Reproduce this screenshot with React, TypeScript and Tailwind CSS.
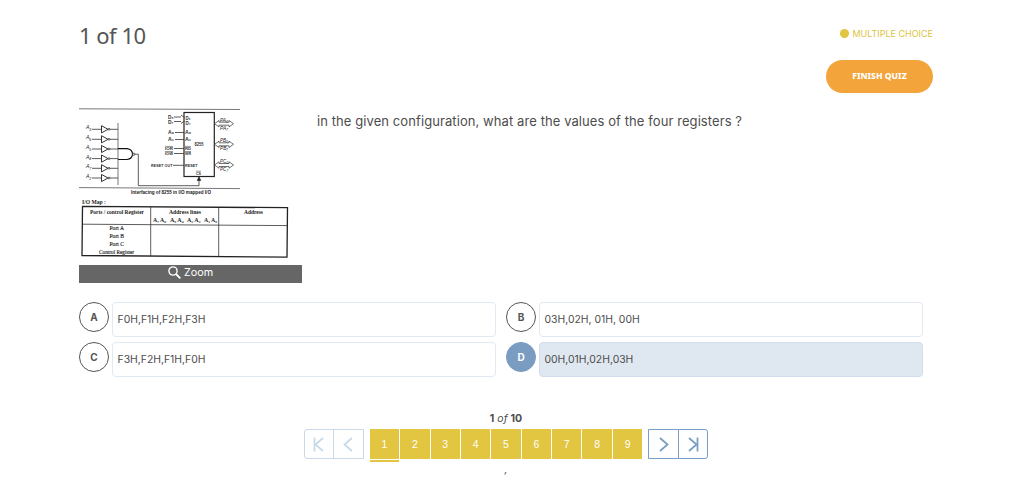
import { useState } from "react";
import clsx from "clsx";

type Option = { letter: string; text: string };

const OPTIONS: Option[] = [
	{ letter: "A", text: "F0H,F1H,F2H,F3H" },
	{ letter: "B", text: "03H,02H, 01H, 00H" },
	{ letter: "C", text: "F3H,F2H,F1H,F0H" },
	{ letter: "D", text: "00H,01H,02H,03H" },
];

const PAGES = [1, 2, 3, 4, 5, 6, 7, 8, 9];

const INVERTERS = [
	{ y: 24.3, pin: "3" },
	{ y: 34.3, pin: "6" },
	{ y: 44, pin: "5" },
	{ y: 53.6, pin: "4" },
	{ y: 63.3, pin: "7" },
	{ y: 73, pin: "2" },
];

const BUSES = [
	{ y: 18.7, name: "PA" },
	{ y: 39.3, name: "PB" },
	{ y: 60, name: "PC" },
];

type LabelProps = {
	x: number;
	y: number;
	width: number;
	children: string;
	size?: number;
};

const Label = ({ x, y, width, children, size = 4.6 }: LabelProps) => (
	<text x={x} y={y} fontSize={size} textLength={width} lengthAdjust="spacingAndGlyphs">
		{children}
	</text>
);

const CircuitDiagram = () => (
	<svg
		width="223"
		height="160"
		viewBox="0 0 223 160"
		fill="none"
		stroke="#333"
		strokeWidth="0.8"
		className="block font-['Liberation_Sans',sans-serif]"
	>
		<path d="M0 3.8L161 4.5M0 82.6L161 83.6" stroke="#555" />

		{/* address decoder */}
		<path d="M39 18V80" stroke="#555" />
		{INVERTERS.map(({ y, pin }) => (
			<g key={pin}>
				<path d={`M13 ${y}H22M29.5 ${y}H39`} />
				<path d={`M22.5 ${y - 3.6}L29 ${y}L22.5 ${y + 3.6}Z`} strokeWidth="1" />
				<circle cx="30" cy={y} r="0.9" fill="#fff" />
				<g fill="#222" stroke="none" className="italic">
					<Label x={7} y={y} width={3.5}>A</Label>
					<Label x={10.3} y={y + 1.5} width={2} size={3.5}>{pin}</Label>
				</g>
			</g>
		))}
		<path d="M39 43.7H48Q53.5 44.5 53.5 49Q53.5 53.8 48 54.5H39" stroke="#111" strokeWidth="1.2" />
		<circle cx="54.8" cy="49.2" r="1.1" fill="#fff" />
		<path d="M56 49.2H59.3V80.7H120V73" />
		<path d="M118.3 75.5L120 71.8L121.7 75.5Z" fill="#222" />

		{/* 8255 chip */}
		<rect x="105" y="7.5" width="30.3" height="64" stroke="#222" strokeWidth="1.2" />
		<path d="M95 12H102M95 16.5H102M102 10L105.5 12.5M102 18.5L105.5 16M96 27.5H105M96 34.5H105M95 43.5H105M95 48.5H105M94 60.3H105" />
		<g fill="#333" stroke="none" className="font-bold">
			<Label x={89} y={14.4} width={5.5}>D₀</Label>
			<Label x={89} y={19.1} width={5.5}>D₇</Label>
			<Label x={106.5} y={14.8} width={5}>D₀</Label>
			<Label x={106.5} y={19.8} width={5}>D₇</Label>
			<Label x={89} y={29} width={6}>A₀</Label>
			<Label x={89} y={36} width={6}>A₁</Label>
			<Label x={106} y={29} width={6}>A₀</Label>
			<Label x={106} y={36} width={6}>A₁</Label>
			<Label x={86} y={45} width={8} size={4}>IOR</Label>
			<Label x={86} y={50.1} width={8} size={4}>IOW</Label>
			<Label x={106} y={45} width={6} size={4}>RD</Label>
			<Label x={106} y={50.1} width={6} size={4}>WR</Label>
			<Label x={72} y={61.8} width={21.5} size={4.2}>RESET OUT</Label>
			<Label x={106} y={61.8} width={12.5} size={4.2}>RESET</Label>
			<Label x={115.5} y={41} width={9}>8255</Label>
			<Label x={117} y={70.2} width={5} size={4.4}>CS</Label>
		</g>
		<path d="M86 41.4H94M86 46.5H94M106 41.4H112M106 46.5H112M117 66.2H122" strokeWidth="0.5" />
		{BUSES.map(({ y, name }) => (
			<g key={name}>
				<path
					d={`M135.5 ${y}L140 ${y - 3.2}V${y - 1.5}H150V${y - 3.2}L154.5 ${y}L150 ${y + 3.2}V${y + 1.5}H140V${y + 3.2}Z`}
					fill="#fff"
					strokeWidth="0.7"
				/>
				<g fill="#222" stroke="none" className="italic">
					<Label x={141} y={y - 2.2} width={8} size={5}>{`${name}₀`}</Label>
					<Label x={141} y={y + 6} width={8} size={5}>{`${name}₇`}</Label>
				</g>
			</g>
		))}
		<g fill="#222" stroke="none" className="font-bold">
			<Label x={52} y={89.2} width={80} size={4.8}>Interfacing of 8255 in I/O mapped I/O</Label>
		</g>

		{/* I/O map table */}
		<path d="M3.5 101.3L208.5 102.7L208 152.2L3 150.5Z" stroke="#222" strokeWidth="1.3" />
		<path d="M3.5 119.2L208.5 120.6M71.7 101.5V151M139.7 102V151.5" stroke="#333" />
		<g fill="#222" stroke="none" className="font-['Liberation_Serif',serif] font-bold">
			<Label x={3} y={98.8} width={24} size={5.7}>I/O Map :</Label>
			<Label x={11} y={108.5} width={54} size={5.2}>Ports / control Register</Label>
			<Label x={90} y={108.9} width={32} size={5.2}>Address lines</Label>
			<Label x={165} y={109.3} width={19} size={5.2}>Address</Label>
			<Label x={74} y={117.3} width={13} size={6}>A₇ A₆</Label>
			<Label x={91} y={117.3} width={13.5} size={6}>A₅ A₄</Label>
			<Label x={108} y={117.3} width={13.5} size={6}>A₃ A₂</Label>
			<Label x={125} y={117.3} width={13} size={6}>A₁ A₀</Label>
		</g>
		<g fill="#111" stroke="#111" strokeWidth="0.12" className="font-['Liberation_Serif',serif]">
			<Label x={30.5} y={125.4} width={14.5} size={5.4}>Port A</Label>
			<Label x={30.5} y={133.4} width={14.5} size={5.4}>Port B</Label>
			<Label x={30.5} y={141} width={14.5} size={5.4}>Port C</Label>
			<Label x={20} y={149} width={35} size={5.4}>Control Register</Label>
		</g>
	</svg>
);

type OptionRowProps = { option: Option; selected: boolean; onSelect: () => void };

const OptionRow = ({ option, selected, onSelect }: OptionRowProps) => (
	<button type="button" className="flex h-[35px] w-[417px] gap-[3px] text-left" onClick={onSelect}>
		<span
			className={clsx(
				"flex size-[30px] shrink-0 items-center justify-center rounded-full border pt-px text-[10px] font-bold",
				selected ? "border-[#7a9cc1] bg-[#7a9cc1] text-white" : "border-[#555] text-[#555]",
			)}
		>
			{option.letter}
		</span>
		<span
			className={clsx(
				"flex h-[35px] flex-1 items-center rounded-[4px] border px-[4.5px] text-[10.4px] text-[#4d4d4d]",
				selected ? "border-[#d0deed] bg-[#dfe8f1]" : "border-[#e1e9f3]",
			)}
		>
			{option.text}
		</span>
	</button>
);

export default function App() {
	const [selected, setSelected] = useState("D");
	const [page, setPage] = useState(1);

	return (
		<main className="h-[495px] w-[1024px] overflow-hidden bg-white pr-[91px] pl-[79px] font-['Inter',sans-serif] text-[#4d4d4d]">
			<header className="flex h-[105px] justify-between">
				<h1 className="pt-[19px] font-['Noto_Sans',sans-serif] text-[22px] leading-[32px] tracking-[-0.5px] text-[#555]">
					1 of 10
				</h1>
				<div className="flex flex-col items-end pt-[27px]">
					<div className="flex h-[14px] items-center gap-[3px] text-[9px] text-[#dbc43d]">
						<span className="mb-px size-[9px] rounded-full bg-[#e2c541]" />
						MULTIPLE CHOICE
					</div>
					<button
						type="button"
						className="mt-[19px] h-[33px] w-[107px] rounded-full bg-[#f3a43b] pb-px font-['Noto_Sans',sans-serif] text-[8.6px] font-extrabold text-white"
					>
						FINISH QUIZ
					</button>
				</div>
			</header>

			<section className="flex h-[197px] gap-[15px]">
				<div className="w-[223px]">
					<CircuitDiagram />
					<button
						type="button"
						className="flex h-[18px] w-full items-start justify-center gap-[3px] bg-[#666] text-[10.8px] leading-[16px] text-white"
					>
						<svg width="13" height="14" viewBox="0 0 13 14" fill="none" stroke="currentColor" strokeWidth="1.4">
							<circle cx="5" cy="6" r="4.1" />
							<path d="M8 9L12.3 13.3" strokeWidth="1.8" />
						</svg>
						Zoom
					</button>
				</div>
				<p className="pt-[7px] text-[13px] leading-[19px] tracking-[0.085px] whitespace-nowrap">
					in the given configuration, what are the values of the four registers ?
				</p>
			</section>

			<section className="grid grid-cols-[417px_417px] gap-x-[10px] gap-y-[5px]">
				{OPTIONS.map((option) => (
					<OptionRow
						key={option.letter}
						option={option}
						selected={selected === option.letter}
						onSelect={() => {
							setSelected(option.letter);
						}}
					/>
				))}
			</section>

			<footer className="flex flex-col items-center pt-[35px]">
				<div className="text-[10.5px] leading-[14px]">
					<b>1</b> <i>of</i> <b>10</b>
				</div>
				<nav className="mt-[3px] flex h-[33px] gap-[6px]">
					<div className="flex h-[30px] w-[60px] rounded-l-[3px] border border-[#c9d9e9] text-[#c9d9e9]">
						<button type="button" className="flex w-[29px] items-center justify-center border-r border-current">
							<svg width="11" height="16" viewBox="0 0 11 16" fill="none" stroke="currentColor" strokeWidth="1.8">
								<path d="M1.5 1.5V15.5M10 2L2.5 8.5L10 15" />
							</svg>
						</button>
						<button type="button" className="flex flex-1 items-center justify-center">
							<svg width="10" height="16" viewBox="0 0 10 16" fill="none" stroke="currentColor" strokeWidth="1.8">
								<path d="M9 2L1.5 8.5L9 15" />
							</svg>
						</button>
					</div>
					<div className="flex gap-px font-['Liberation_Sans',sans-serif] text-[10.5px] text-white">
						{PAGES.map((n) => (
							<button
								key={n}
								type="button"
								className="flex w-[29.4px] flex-col gap-px"
								onClick={() => {
									setPage(n);
								}}
							>
								<span className="flex h-[30px] w-full items-center justify-center bg-[#e2c541] pt-px">{n}</span>
								{page === n && <span className="h-[2px] w-full bg-[#e2c541]" />}
							</button>
						))}
					</div>
					<div className="flex h-[30px] w-[60px] rounded-r-[3px] border border-[#7a9fc4] text-[#7a9fc4]">
						<button type="button" className="flex w-[30px] items-center justify-center border-r border-current">
							<svg width="10" height="16" viewBox="0 0 10 16" fill="none" stroke="currentColor" strokeWidth="1.8">
								<path d="M1 2L8.5 8.5L1 15" />
							</svg>
						</button>
						<button type="button" className="flex flex-1 items-center justify-center">
							<svg width="11" height="16" viewBox="0 0 11 16" fill="none" stroke="currentColor" strokeWidth="1.8">
								<path d="M9.5 1.5V15.5M1 2L8.5 8.5L1 15" />
							</svg>
						</button>
					</div>
				</nav>
				<span className="text-[10px] leading-[14px] italic">,</span>
			</footer>
		</main>
	);
}
